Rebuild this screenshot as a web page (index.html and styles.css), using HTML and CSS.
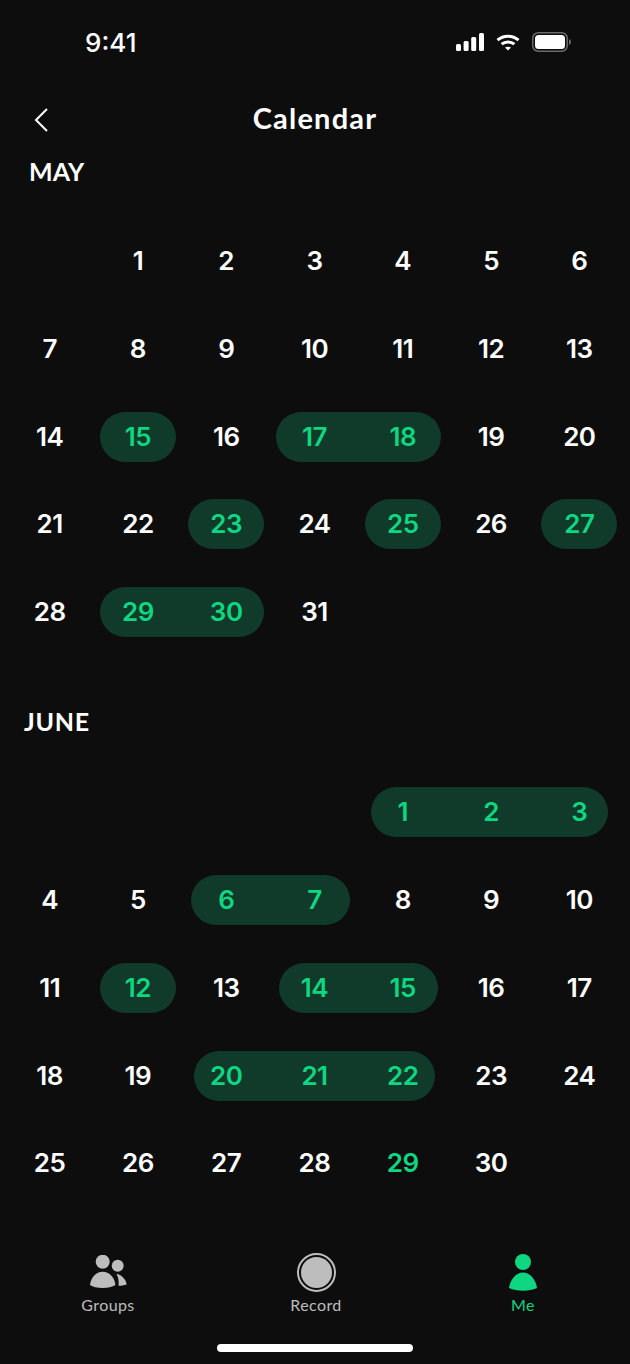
FILE: index.html
```html
<!DOCTYPE html>
<html>
<head>
    <title>Calendar</title>
    <meta name="viewport" content="width=device-width, initial-scale=1.0">
    <link rel="stylesheet" href="styles.css">
</head>
<body>
    <div class="app">
        <div class="status-bar">
            <div class="status-time">9:41</div>
            <div class="status-icons">
                <svg class="icon-signal" viewBox="0 0 28 18" width="28" height="18" fill="#fff">
                    <rect x="0" y="11" width="5" height="7" rx="1.5"/>
                    <rect x="7.6" y="8" width="5" height="10" rx="1.5"/>
                    <rect x="15.2" y="4" width="5" height="14" rx="1.5"/>
                    <rect x="23" y="0" width="5" height="18" rx="1.5"/>
                </svg>
                <svg class="icon-wifi" viewBox="0 0 24 17" width="24" height="17" fill="none" stroke="#fff" stroke-width="3">
                    <path d="M1.5 6.2C7.4 .9 16.6 .9 22.5 6.2"/>
                    <path d="M5.6 10.2c3.6-3.1 9.2-3.1 12.8 0"/>
                    <path d="M9 13.6c1.700-1.200 4.300-1.200 6 0L12 16.500z" fill="#fff" stroke="none"/>
                </svg>
                <svg class="icon-battery" viewBox="0 0 39 20" width="39" height="20" fill="none">
                    <rect x=".75" y=".75" width="34.500" height="18.500" rx="5.500" stroke="#6b6b6b" stroke-width="1.500"/>
                    <rect x="3" y="3" width="30" height="14" rx="3.500" fill="#fff"/>
                    <path d="M37 7v6c1.200-.4 2-1.700 2-3s-.8-2.600-2-3z" fill="#6b6b6b"/>
                </svg>
            </div>
        </div>

        <div class="nav">
            <svg class="nav-back" viewBox="0 0 14 24" width="14" height="24" fill="none" stroke="#fff" stroke-width="2">
                <path d="M13 1L2 12l11 11"/>
            </svg>
            <div class="nav-title">Calendar</div>
        </div>

        <!-- May -->
        <div class="month-title">MAY</div>
        <div class="month">
            <div class="week">
                <div class="day"></div>
                <div class="day">1</div>
                <div class="day">2</div>
                <div class="day">3</div>
                <div class="day">4</div>
                <div class="day">5</div>
                <div class="day">6</div>
            </div>
            <div class="week">
                <div class="day">7</div>
                <div class="day">8</div>
                <div class="day">9</div>
                <div class="day">10</div>
                <div class="day">11</div>
                <div class="day">12</div>
                <div class="day">13</div>
            </div>
            <div class="week">
                <div class="day">14</div>
                <div class="range"><div class="day">15</div></div>
                <div class="day">16</div>
                <div class="range span-2"><div class="day">17</div><div class="day">18</div></div>
                <div class="day">19</div>
                <div class="day">20</div>
            </div>
            <div class="week">
                <div class="day">21</div>
                <div class="day">22</div>
                <div class="range"><div class="day">23</div></div>
                <div class="day">24</div>
                <div class="range"><div class="day">25</div></div>
                <div class="day">26</div>
                <div class="range"><div class="day">27</div></div>
            </div>
            <div class="week">
                <div class="day">28</div>
                <div class="range span-2"><div class="day">29</div><div class="day">30</div></div>
                <div class="day">31</div>
            </div>
        </div>

        <!-- June -->
        <div class="month-title month-title-june">JUNE</div>
        <div class="month">
            <div class="week">
                <div class="day"></div>
                <div class="day"></div>
                <div class="day"></div>
                <div class="day"></div>
                <div class="range span-3 inset-wide inset-end"><div class="day">1</div><div class="day">2</div><div class="day">3</div></div>
            </div>
            <div class="week">
                <div class="day">4</div>
                <div class="day">5</div>
                <div class="range span-2 inset-mid"><div class="day">6</div><div class="day">7</div></div>
                <div class="day">8</div>
                <div class="day">9</div>
                <div class="day">10</div>
            </div>
            <div class="week">
                <div class="day">11</div>
                <div class="range"><div class="day">12</div></div>
                <div class="day">13</div>
                <div class="range span-2 inset-mid"><div class="day">14</div><div class="day">15</div></div>
                <div class="day">16</div>
                <div class="day">17</div>
            </div>
            <div class="week">
                <div class="day">18</div>
                <div class="day">19</div>
                <div class="range span-3 inset-wide"><div class="day">20</div><div class="day">21</div><div class="day">22</div></div>
                <div class="day">23</div>
                <div class="day">24</div>
            </div>
            <div class="week">
                <div class="day">25</div>
                <div class="day">26</div>
                <div class="day">27</div>
                <div class="day">28</div>
                <div class="day day-marked">29</div>
                <div class="day">30</div>
            </div>
        </div>

        <div class="tab-bar">
            <div class="tab tab-groups">
                <svg viewBox="0 0 37 34" width="37" height="34" fill="#bdbdbd">
                    <circle cx="12.700" cy="6.700" r="7"/>
                    <circle cx="27.700" cy="10.700" r="6"/>
                    <path d="M0 30C.5 23 6 16.700 12.700 16.700S25 23 25.400 30C20 34 5 34 0 30z"/>
                    <path d="M26.500 19C31 19.500 36 24 36.700 29.500C34 30.500 31 30.700 28.500 30.700C29 26 28.500 22.500 26.500 19z"/>
                </svg>
                <div class="tab-label">Groups</div>
            </div>
            <div class="tab tab-record">
                <svg viewBox="0 0 39 39" width="39" height="39">
                    <circle cx="19.500" cy="19.500" r="18.500" fill="none" stroke="#bdbdbd" stroke-width="2"/>
                    <circle cx="19.500" cy="19.500" r="15.500" fill="#bdbdbd"/>
                </svg>
                <div class="tab-label">Record</div>
            </div>
            <div class="tab tab-me">
                <svg viewBox="0 0 28 37" width="28" height="37" fill="#0fd680">
                    <circle cx="14" cy="8" r="8"/>
                    <path d="M0 34C1 26 7 18.500 14 18.500S27 26 28 34C20 37.500 8 37.500 0 34z"/>
                </svg>
                <div class="tab-label">Me</div>
            </div>
        </div>
        <div class="home-indicator"></div>
    </div>
</body>
</html>
```

FILE: styles.css
```css
body {
    margin: 0;
    background-color: #0d0d0e;
    color: white;
    font-family: Lato, sans-serif;
}

.app {
    height: 1364px;
    display: flex;
    flex-direction: column;
    overflow: hidden;
}

.status-bar {
    height: 84px;
    display: flex;
    justify-content: space-between;
    align-items: center;
    padding: 0 59px 0 85px;
    box-sizing: border-box;
}

.status-time {
    font-family: Inter, sans-serif;
    font-size: 26px;
    font-weight: 500;
}

.status-icons {
    display: flex;
    align-items: center;
    gap: 12px;
}

.nav {
    height: 70px;
    display: flex;
    align-items: center;
    justify-content: center;
    position: relative;
}

.nav-back {
    position: absolute;
    left: 34px;
    top: 24px;
}

.nav-title {
    margin-bottom: 3px;
    font-size: 29px;
    font-weight: 700;
    letter-spacing: 1.2px;
}

.month-title {
    height: 36px;
    line-height: 34px;
    padding-left: 29px;
    margin-bottom: 46px;
    font-size: 25px;
    font-weight: 700;
}

.month-title-june {
    padding-left: 24px;
    margin-top: 67px;
    margin-bottom: 47px;
    letter-spacing: 0.7px;
}

.month {
    display: flex;
    flex-direction: column;
    gap: 37.8px;
    padding: 0 6.5px 0 5.5px;
}

.week {
    height: 50px;
    display: grid;
    grid-template-columns: repeat(7, 1fr);
}

.day {
    flex: 1;
    display: flex;
    align-items: center;
    justify-content: center;
    padding-bottom: 1px;
    font-family: Inter, sans-serif;
    font-size: 26px;
    font-weight: 600;
    letter-spacing: -0.5px;
}

.day-marked,
.range .day {
    color: #0fd680;
}

.range {
    --inset-l: 6px;
    --inset-r: 6px;
    display: flex;
    margin: 0 var(--inset-r) 0 var(--inset-l);
    background-color: #103a29;
    border-radius: 25px;
}

.range .day:first-child {
    margin-left: calc(var(--inset-l) * -1);
}

.range .day:last-child {
    margin-right: calc(var(--inset-r) * -1);
}

.span-2 {
    grid-column: span 2;
}

.span-3 {
    grid-column: span 3;
}

.inset-mid {
    --inset-l: 9px;
    --inset-r: 9px;
}

.inset-wide {
    --inset-l: 12px;
    --inset-r: 12px;
}

.inset-end {
    --inset-r: 16px;
}

.tab-bar {
    margin-top: auto;
    height: 68px;
    display: grid;
    grid-template-columns: 108px 208px 207px;
    justify-content: start;
}

.tab {
    display: flex;
    flex-direction: column;
    align-items: center;
    justify-content: flex-end;
    color: #bdbdbd;
    width: 120px;
}

.tab-groups {
    margin-left: 48px;
}

.tab-groups svg {
    margin-bottom: 3px;
}

.tab-record {
    margin-left: 148px;
}

.tab-me {
    margin-left: 147px;
    color: #0fd680;
}

.tab-me svg {
    margin-bottom: 1px;
}

.tab-label {
    font-size: 16px;
    line-height: 20px;
    margin-top: 3px;
    letter-spacing: 0.4px;
}

.home-indicator {
    width: 196px;
    height: 8px;
    margin: 29px auto 12px;
    background-color: white;
    border-radius: 4px;
}
```
